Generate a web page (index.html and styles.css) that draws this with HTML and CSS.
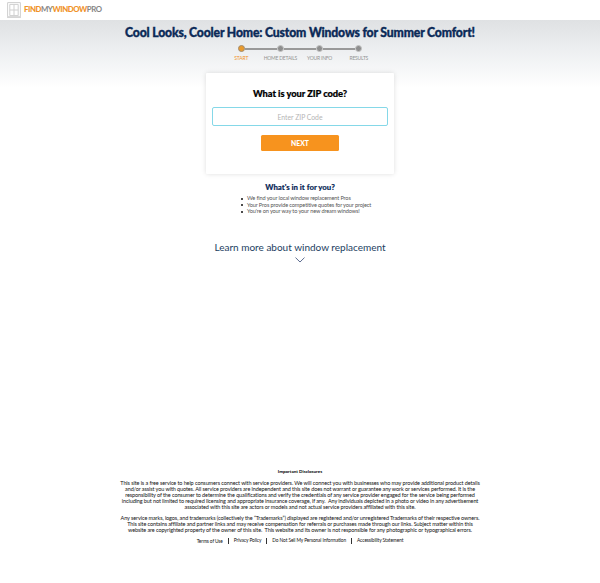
FILE: index.html
```html
<!DOCTYPE html>
<html lang="en">
<head>
<meta charset="utf-8">
<title>Find My Window Pro</title>
<link rel="stylesheet" href="styles.css">
</head>
<body>
<header class="topbar">
  <svg class="logo" width="14" height="16" viewBox="0 0 14 16" fill="none" stroke="#cfcfcf">
    <path d="M.6.6h12.8v14.2H.6zM2.8 2.4h8.4v11.2H2.8zM7 2.4v11.2M2.8 8h8.4M0 15.3h14"/>
  </svg>
  <div class="brand"><b>FIND</b>MY<b>WINDOW</b>PRO</div>
</header>
<main>
  <h1>Cool Looks, Cooler Home: Custom Windows for Summer Comfort!</h1>
  <ol class="steps">
    <li class="active"><i></i><span>START</span></li>
    <li><i></i><span>HOME DETAILS</span></li>
    <li><i></i><span>YOUR INFO</span></li>
    <li><i></i><span>RESULTS</span></li>
  </ol>
  <form class="card">
    <label for="zip">What is your ZIP code?</label>
    <input id="zip" type="text" placeholder="Enter ZIP Code">
    <button type="button">NEXT</button>
  </form>
  <section class="benefits">
    <h2>What's in it for you?</h2>
    <ul>
      <li>We find your local window replacement Pros</li>
      <li>Your Pros provide competitive quotes for your project</li>
      <li>You're on your way to your new dream windows!</li>
    </ul>
  </section>
  <section class="learn">
    <p>Learn more about window replacement</p>
    <svg width="10" height="6" viewBox="0 0 10 6" fill="none" stroke="#4b5c83" stroke-width=".9"><path d="M.5.6 5 5 9.5.6"/></svg>
  </section>
</main>
<footer>
  <h3>Important Disclosures</h3>
  <p>This site is a free service to help consumers connect with service providers. We will connect you with businesses who may provide additional product details<br>and/or assist you with quotes. All service providers are independent and this site does not warrant or guarantee any work or services performed. It is the<br>responsibility of the consumer to determine the qualifications and verify the credentials of any service provider engaged for the service being performed<br>including but not limited to required licensing and appropriate insurance coverage, if any.&nbsp; Any individuals depicted in a photo or video in any advertisement<br>associated with this site are actors or models and not actual service providers affiliated with this site.</p>
  <p>Any service marks, logos, and trademarks (collectively the “Trademarks”) displayed are registered and/or unregistered Trademarks of their respective owners.<br>This site contains affiliate and partner links and may receive compensation for referrals or purchases made through our links. Subject matter within this<br>website are copyrighted property of the owner of this site.&nbsp; This website and its owner is not responsible for any photographic or typographical errors.</p>
  <nav><a>Terms of Use</a><a>Privacy Policy</a><a>Do Not Sell My Personal Information</a><a>Accessibility Statement</a></nav>
</footer>
</body>
</html>
```
FILE: styles.css
```css
* { box-sizing: border-box; margin: 0; padding: 0; }
body { height: 583px; overflow: hidden; background: #fff; font-family: Lato, sans-serif; color: #111; display: flex; flex-direction: column; white-space: nowrap; }
.topbar { height: 20px; flex: none; display: flex; align-items: flex-start; padding: 2px 0 0 7px; gap: 3px; }
.brand { font-size: 7.8px; line-height: 14px; font-weight: 700; color: #858585; letter-spacing: -.45px; }
.brand b { color: #f0922a; font-weight: 900; }
main { height: 448px; flex: none; display: flex; flex-direction: column; align-items: center; background: linear-gradient(#dfe1e3 0, #eceef0 28px, #fff 68px); }
h1 { margin-top: 5px; font-size: 12.2px; line-height: 16px; font-weight: 900; letter-spacing: -.16px; color: #0b2a58; -webkit-text-stroke: .35px #0b2a58; }
.steps { display: flex; list-style: none; margin-top: 4px; }
.steps li { width: 39.2px; display: flex; flex-direction: column; align-items: center; position: relative; }
.steps li + li::before { content: ""; position: absolute; top: 3px; left: -16px; width: 32px; height: 2px; background: #999; }
.steps i { width: 7px; height: 7px; border-radius: 50%; background: #8e8e8e; border: 1.5px solid #c3c3c3; }
.steps span { font-size: 5px; line-height: 7px; margin-top: 3px; letter-spacing: -.22px; color: #939393; }
.steps .active i { background: #e99a2c; border: 1px solid #a18d72; }
.steps .active span { color: #f0922a; letter-spacing: -.1px; }
.card { width: 188px; height: 101px; margin-top: 11px; padding: 15px 6px 0; background: #fff; box-shadow: 0 0 5px #0002; display: flex; flex-direction: column; align-items: center; border-radius: 1px; }
.card label { font-size: 9.3px; line-height: 12px; font-weight: 900; letter-spacing: -.05px; color: #000; -webkit-text-stroke: .2px #000; }
.card input { width: 176px; height: 19px; margin-top: 7px; border: 1px solid #85d8e8; border-radius: 2px; text-align: center; font: 6.8px Lato, sans-serif; outline: 0; background: #fff; }
.card input::placeholder { color: #b5b5b5; opacity: 1; }
.card button { width: 78px; height: 16px; margin-top: 9px; border: 0; border-radius: 1.5px; background: #f7931e; color: #fff; font: 900 6.8px Lato, sans-serif; }
.benefits { width: 120px; margin-top: 7px; }
h2 { text-align: center; font-size: 7.8px; line-height: 12px; font-weight: 900; color: #0b2a58; -webkit-text-stroke: .15px #0b2a58; }
.benefits ul { list-style: none; margin-top: 2px; }
.benefits li { font-size: 5.6px; line-height: 6.5px; letter-spacing: -.13px; padding-left: 7px; color: #555; position: relative; }
.benefits li::before { content: ""; position: absolute; left: 1px; top: 2.5px; width: 2px; height: 2px; border-radius: 50%; background: #111; }
.learn { margin-top: 25px; display: flex; flex-direction: column; align-items: center; color: #1c3e61; font-size: 10px; line-height: 14px; }
.learn svg { margin-top: 3px; }
footer { text-align: center; font-size: 5.5px; line-height: 6px; color: #111; letter-spacing: -.1px; }
h3 { font-size: 4.5px; line-height: 6px; font-weight: 900; padding-top: 1px; margin-bottom: 5px; letter-spacing: 0; }
footer p { margin-bottom: 5px; }
footer nav { display: flex; justify-content: center; font-size: 4.8px; margin-top: 3px; }
footer a + a { border-left: .7px solid #333; margin-left: 5px; padding-left: 5px; line-height: 5px; }
footer a { line-height: 6px; }
```
